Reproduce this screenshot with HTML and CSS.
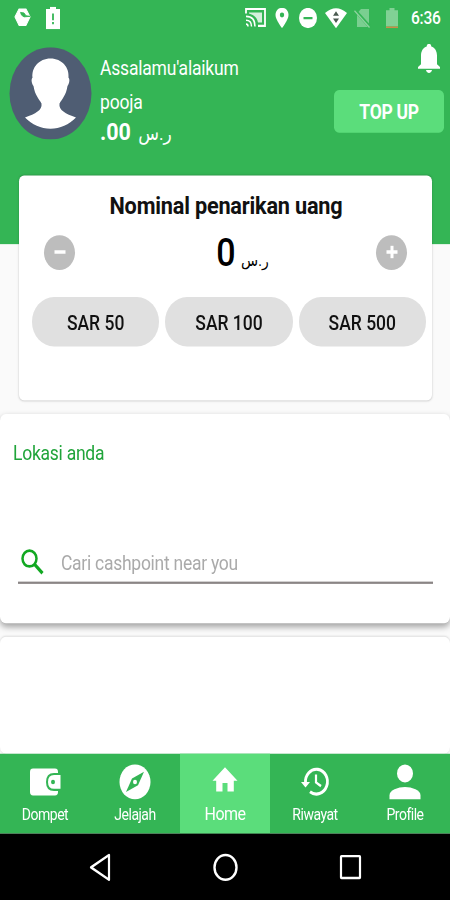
FILE: index.html
```html
<!DOCTYPE html>
<html lang="id">
<head>
    <meta charset="UTF-8">
    <meta name="viewport" content="width=device-width, initial-scale=1.0">
    <title>Home</title>
    <link rel="stylesheet" href="styles.css">
</head>
<body>
    <div class="screen">
        <div class="header">
            <div class="status-bar">
                <svg class="st-sync" width="17" height="17" viewBox="0 0 17 17"><path d="M5 1h7l4 7-4 7.500H5L1 8z" fill="#fff" stroke="#fff" stroke-linejoin="round"/><path d="M6.500 4l3.500.5 2 2.500 4 .5-6 .5q-3-1-3.500-4z" fill="#34b555" stroke="#34b555" stroke-width=".8"/></svg>
                <svg class="st-battery" width="14" height="20" viewBox="0 0 14 20"><path d="M4 0h6v2h4v18H0V2h4z" fill="#fff"/><path d="M7 6v6M7 13.500v2" stroke="#34b555" stroke-width="1.800"/></svg>
                <div class="status-right">
                    <svg width="21" height="17" viewBox="0 0 21 17"><path d="M1 5V1h19v15h-7" fill="none" stroke="#fff" stroke-width="1.800"/><path d="M4 4h13v9h-4C12 8 8 6 4 5z" fill="#fff" opacity=".8"/><path d="M1 14.500q2 0 2 2M1 11q5.500 0 5.500 5.500M1 7.500q9 0 9 9" fill="none" stroke="#fff" stroke-width="1.500"/></svg>
                    <svg class="st-pin" width="14" height="18" viewBox="0 0 14 18"><path d="M7 0C3 0 .5 2.800.5 6.300.5 10.500 7 18 7 18s6.500-7.500 6.500-11.700C13.500 2.800 11 0 7 0z" fill="#fff"/><circle cx="7" cy="6.300" r="2.200" fill="#34b555"/></svg>
                    <svg class="st-dnd" width="18" height="18" viewBox="0 0 18 18"><circle cx="9" cy="9" r="9" fill="#fff"/><path d="M4.500 9h9" stroke="#34b555" stroke-width="2"/></svg>
                    <svg class="st-wifi" width="22" height="18" viewBox="0 0 22 18"><path d="M0 4.500Q11-4 22 4.500L11 18z" fill="#fff"/><path d="M8 7l3-4 3 4zM8 9.500h6l-3 4z" fill="#4a5a50"/></svg>
                    <svg class="st-sim" width="17" height="18" viewBox="0 0 17 18"><path d="M7 1h8v16H3V5z" fill="#fff" opacity=".35"/><path d="M1 2l15 15" stroke="#34b555" stroke-width="3"/><path d="M.5 2.500l15 15" stroke="#8fd3a0" stroke-width="1.300"/></svg>
                    <svg class="st-level" width="12" height="18" viewBox="0 0 12 18"><path d="M3.500 0h5v2H12v14.500H0V2h3.500z" fill="#fff" opacity=".38"/><path d="M0 16.500h12V18H0z" fill="#c98d4a"/></svg>
                    <span class="clock">6:36</span>
                </div>
            </div>
            <div class="user">
                <svg class="avatar" width="83" height="82" viewBox="0 0 83 82">
                    <circle cx="41.500" cy="41" r="41" fill="#4f5d73"/>
                    <path d="M41.500 10C30 10 22.500 18 23.500 27c-1.500 1-1 5 1 7.500C26 43 30 46 32.500 50c1 6-6 9-16.500 12.500C23 69 32 72.500 41.500 72.500S60 69 67 62.500C56.500 59 49.500 56 50.500 50c2.500-4 6.500-7 8-15.500 2-2.500 2.500-6.500 1-7.500C60.500 18 53 10 41.500 10z" fill="#fff"/>
                </svg>
                <div class="user-info">
                    <div class="greeting">Assalamu'alaikum</div>
                    <div class="name">pooja</div>
                    <div class="balance"><b>.00</b> <span class="riyal">ر.س</span></div>
                </div>
                <div class="user-actions">
                    <svg class="bell" width="22" height="26" viewBox="0 0 22 26"><path d="M11 0c-1.500 0-2.300 1-2.300 2.300C5 3.300 3 6.500 3 10.500V18L0 20.500V22h22v-1.500L19 18v-7.500c0-4-2-7.200-5.700-8.200C13.300 1 12.500 0 11 0zM8 23.300c.3 1.600 1.500 2.500 3 2.500s2.700-.9 3-2.500z" fill="#fff"/></svg>
                    <button class="top-up">TOP UP</button>
                </div>
            </div>
        </div>

        <div class="withdraw">
            <h1>Nominal penarikan uang</h1>
            <div class="amount-row">
                <button class="round"><svg width="12" height="12" viewBox="0 0 12 12"><path d="M.5 6h11" stroke="#fff" stroke-width="3"/></svg></button>
                <div class="amount"><b>0</b> <span class="riyal">ر.س</span></div>
                <button class="round"><svg width="12" height="12" viewBox="0 0 12 12"><path d="M.5 6h11M6 .5v11" stroke="#fff" stroke-width="3"/></svg></button>
            </div>
            <div class="presets">
                <button>SAR 50</button>
                <button>SAR 100</button>
                <button>SAR 500</button>
            </div>
        </div>

        <div class="location">
            <h2>Lokasi anda</h2>
            <div class="search">
                <svg width="23" height="23" viewBox="0 0 23 23"><circle cx="8.500" cy="8.500" r="7" fill="none" stroke="#12a822" stroke-width="2.500"/><path d="M13.500 13.500l8 8" stroke="#12a822" stroke-width="3"/></svg>
                <input type="text" placeholder="Cari cashpoint near you">
            </div>
        </div>

        <div class="results"></div>

        <div class="tabs">
            <a class="tab">
                <svg width="32" height="32" viewBox="0 0 32 32"><path d="M4 4h22q3 0 3 3v18q0 3-3 3H4q-3 0-3-3V7q0-3 3-3z" fill="#fff"/><path d="M32 8h-7q-8 0-8 8t8 8h7z" fill="#34b555"/><path d="M31.500 9.800H25q-6 0-6 6.200t6 6.200h6.500z" fill="#fff"/><circle cx="24" cy="16" r="2" fill="#34b555"/></svg>
                <span>Dompet</span>
            </a>
            <a class="tab">
                <svg width="32" height="32" viewBox="0 0 32 32"><circle cx="16" cy="16" r="15.500" fill="#fff"/><path d="M25 7l-6 12L7 25l6-12z" fill="#34b555"/><circle cx="16" cy="16" r="2" fill="#fff"/></svg>
                <span>Jelajah</span>
            </a>
            <a class="tab active">
                <svg width="32" height="32" viewBox="0 0 32 32"><path d="M16 3L3.500 15h3.700v9.500h6.300V17h5v7.500h6.300V15h3.700z" fill="#fff"/></svg>
                <span>Home</span>
            </a>
            <a class="tab">
                <svg width="32" height="32" viewBox="0 0 32 32"><path d="M6.500 17A11 11 0 1 1 11 24.700" fill="none" stroke="#fff" stroke-width="2.800"/><path d="M2 16h9l-4.500 5z" fill="#fff"/><path d="M17 9.500v7l5 3.300" fill="none" stroke="#fff" stroke-width="2.200"/></svg>
                <span>Riwayat</span>
            </a>
            <a class="tab">
                <svg width="32" height="32" viewBox="0 0 32 32"><circle cx="16" cy="8.500" r="8" fill="#fff"/><path d="M.5 31.500V28q0-3.500 5-5.500t10.500-2 10.500 2 5 5.500v3.500z" fill="#fff"/></svg>
                <span>Profile</span>
            </a>
        </div>

        <div class="android-nav">
            <svg width="24" height="26" viewBox="0 0 24 26"><path d="M21 2v22L3 13z" fill="none" stroke="#fff" stroke-width="2.200" stroke-linejoin="round"/></svg>
            <svg width="26" height="26" viewBox="0 0 26 26"><circle cx="13.500" cy="13" r="11" fill="none" stroke="#fff" stroke-width="2.400"/></svg>
            <svg width="24" height="26" viewBox="0 0 24 26"><rect x="3" y="3" width="19" height="19.500" rx=".5" fill="none" stroke="#fff" stroke-width="2.200"/></svg>
        </div>
    </div>
</body>
</html>
```
FILE: styles.css
```css
* {
    box-sizing: border-box;
}

body {
    margin: 0;
    height: 900px;
    overflow: hidden;
    font-family: Roboto, "DejaVu Sans", sans-serif;
    background: #000;
}

/* 450x800 screen, stretched to the height of the window */
.screen {
    display: flex;
    flex-direction: column;
    width: 450px;
    height: 800px;
    transform: scaleY(1.125);
    transform-origin: top;
    background: #fafafa;
}

h1, h2 {
    margin: 0;
}

button {
    padding: 0;
    border: none;
    font-family: inherit;
    font-weight: 500;
    cursor: pointer;
}

svg {
    display: block;
    flex: none;
}

.header {
    flex: none;
    height: 217px;
    background: #34b555;
    color: #fff;
}

.status-bar {
    display: flex;
    align-items: center;
    height: 30px;
    padding: 1px 9px 0 14px;
}

.st-battery {
    margin-left: 15px;
}

.status-right {
    display: flex;
    align-items: center;
    margin-left: auto;
}

.st-pin {
    margin-left: 9px;
}

.st-dnd {
    margin-left: 10px;
}

.st-wifi {
    margin-left: 8px;
}

.st-sim {
    margin-left: 7px;
}

.st-level {
    margin-left: 15px;
}

.clock {
    width: 30px;
    margin-left: 13px;
    font-size: 15.5px;
    font-weight: 500;
    letter-spacing: -0.2px;
    white-space: nowrap;
}

.user {
    display: flex;
    padding: 9px 6px 0 9px;
}

.avatar {
    margin-top: 3px;
}

.user-info {
    padding: 10px 0 0 8px;
    font-size: 17.5px;
    letter-spacing: -0.2px;
    line-height: 24px;
}

.name {
    margin-top: 6px;
}

.balance {
    margin-top: 2px;
    font-size: 21.5px;
}

.balance .riyal {
    margin-left: 2px;
    font-size: 17px;
    letter-spacing: 0;
}

.user-actions {
    display: flex;
    flex-direction: column;
    align-items: flex-end;
    margin-left: auto;
}

.bell {
    margin-right: 4px;
}

.top-up {
    width: 110px;
    height: 38px;
    margin-top: 15px;
    padding-top: 2px;
    border-radius: 5px;
    background: #5bdd7b;
    color: #fff;
    font-size: 17.5px;
    font-weight: 700;
    letter-spacing: -0.3px;
}

.withdraw {
    flex: none;
    height: 200px;
    margin: -61px 18px 0 19px;
    padding: 14px 6px 0 13px;
    border-radius: 5px;
    background: #fff;
    box-shadow: 0 0 2px rgba(0, 0, 0, 0.25);
}

.withdraw h1 {
    padding-right: 6px;
    font-size: 21.7px;
    font-weight: 700;
    letter-spacing: -0.2px;
    line-height: 26px;
    text-align: center;
    color: #111;
}

.amount-row {
    display: flex;
    align-items: center;
    justify-content: space-between;
    height: 56px;
    padding: 0 19px 0 12px;
}

.round {
    display: flex;
    align-items: center;
    justify-content: center;
    width: 31px;
    height: 31px;
    border-radius: 50%;
    background: #bdbdbd;
}

.amount {
    padding-top: 6px;
    margin-left: 34px;
    font-size: 34px;
    line-height: 40px;
}

.amount b {
    font-weight: 500;
}

.amount .riyal {
    margin-left: -3px;
    font-size: 14px;
}

.presets {
    display: flex;
    gap: 6px;
    margin-top: 12px;
}

.presets button {
    flex: 1;
    height: 44px;
    padding-top: 1px;
    border-radius: 22px;
    background: #e0e0e0;
    color: #111;
    font-size: 17.5px;
}

.location {
    flex: none;
    height: 186px;
    margin-top: 12px;
    padding: 23px 17px 0 13px;
    border-radius: 6px;
    background: #fff;
    box-shadow: 0 3px 6px rgba(0, 0, 0, 0.35);
}

.location h2 {
    font-size: 17.5px;
    font-weight: 400;
    letter-spacing: -0.25px;
    line-height: 24px;
    color: #20a43a;
}

.search {
    display: flex;
    align-items: center;
    height: 40px;
    margin: 64px 0 0 5px;
    padding: 3px 0 0 3px;
    border-bottom: 2px solid #8a8585;
}

.search input {
    flex: 1;
    margin-left: 17px;
    padding: 3px 0 0;
    border: none;
    outline: none;
    background: none;
    font-family: inherit;
    font-size: 17.5px;
    letter-spacing: -0.27px;
}

.search input::placeholder {
    color: #aaa;
}

.results {
    flex: 1;
    margin-top: 12px;
    border-radius: 6px;
    background: #fff;
    box-shadow: 0 0 2px rgba(0, 0, 0, 0.15);
}

.tabs {
    display: flex;
    flex: none;
    height: 71px;
    background: #34b555;
}

.tab {
    display: flex;
    flex: 1;
    flex-direction: column;
    align-items: center;
    padding-top: 9px;
    color: #fff;
    font-size: 14px;
    letter-spacing: -0.5px;
    line-height: 18px;
}

.tab span {
    margin-top: 4px;
}

.tab.active {
    background: #5bdd7b;
    font-size: 16px;
}

.android-nav {
    display: flex;
    flex: none;
    align-items: center;
    justify-content: center;
    gap: 100px;
    height: 59px;
    background: #000;
}
```
